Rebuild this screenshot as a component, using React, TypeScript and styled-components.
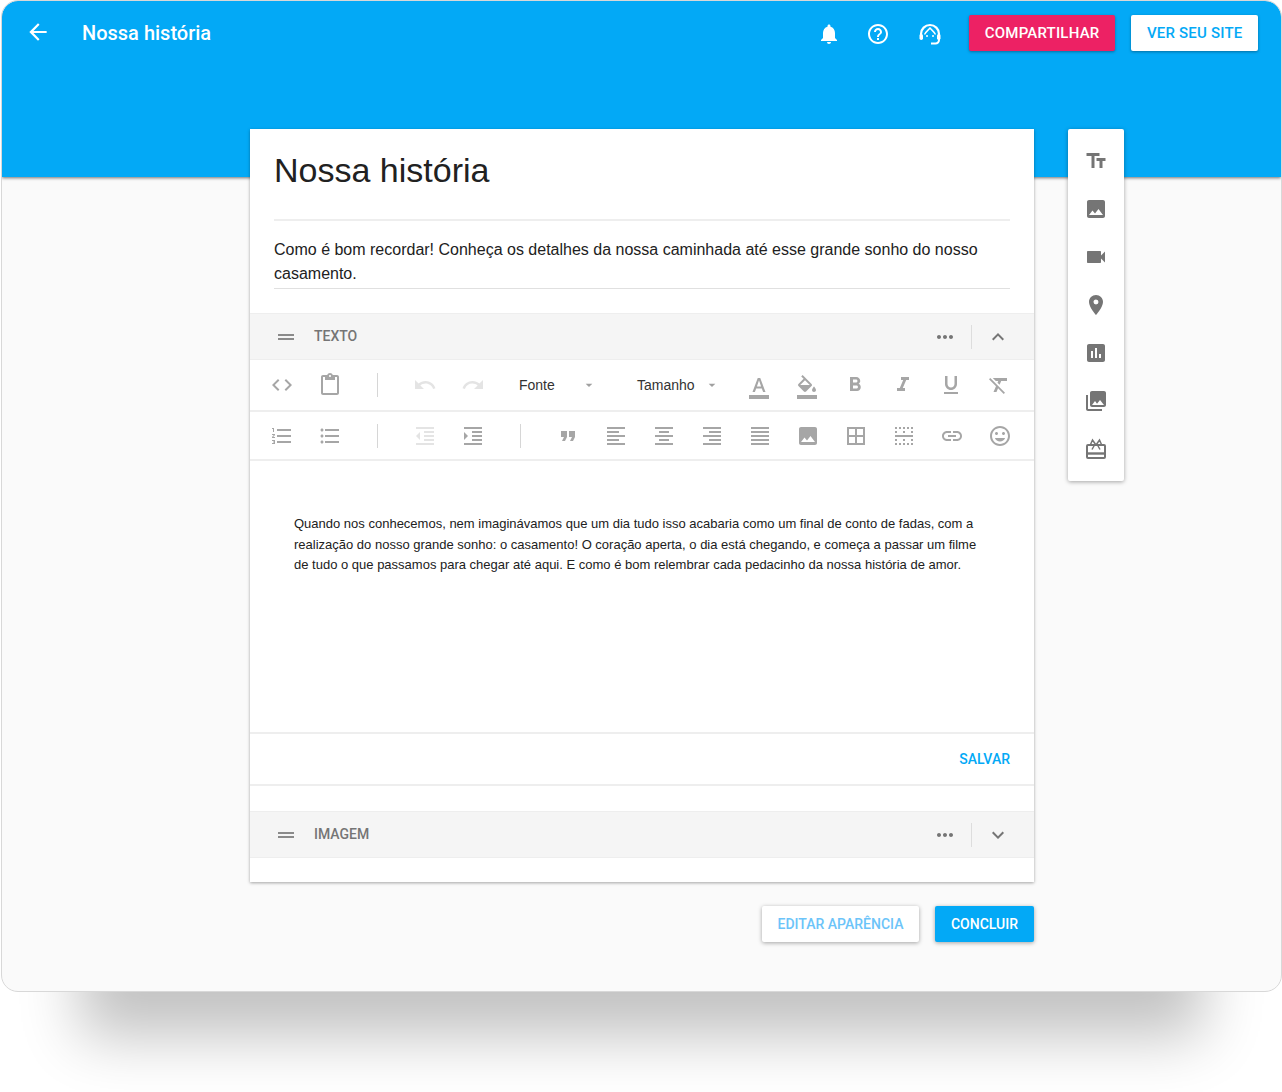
import React from "react";
import styled, { createGlobalStyle } from "styled-components";
import {
  MdArrowBack,
  MdNotifications,
  MdHelpOutline,
  MdTextFields,
  MdImage,
  MdVideocam,
  MdPlace,
  MdAssessment,
  MdPhotoLibrary,
  MdDragHandle,
  MdMoreHoriz,
  MdExpandLess,
  MdExpandMore,
  MdCode,
  MdContentPaste,
  MdUndo,
  MdRedo,
  MdArrowDropDown,
  MdFormatColorText,
  MdFormatColorFill,
  MdFormatBold,
  MdFormatItalic,
  MdFormatUnderlined,
  MdFormatClear,
  MdFormatListNumbered,
  MdFormatListBulleted,
  MdFormatIndentDecrease,
  MdFormatIndentIncrease,
  MdFormatQuote,
  MdFormatAlignLeft,
  MdFormatAlignCenter,
  MdFormatAlignRight,
  MdFormatAlignJustify,
  MdBorderAll,
  MdBorderHorizontal,
  MdLink,
  MdTagFaces,
} from "react-icons/md";

const GlobalStyle = createGlobalStyle`
  html, body {
    margin: 0;
    background: #fff;
  }
  body {
    height: 1092px;
    overflow: hidden;
    font-family: Roboto, "Liberation Sans", sans-serif;
  }
  * {
    box-sizing: border-box;
  }
`;

const Stage = styled.div`
  padding: 1px 1px 1px 2px;
`;

const WindowShadow = styled.div`
  border-radius: 16px;
  box-shadow: 0 124px 56px -78px rgba(0, 0, 0, 0.24);
`;

const Frame = styled.div`
  width: 1279px;
  height: 990px;
  border-radius: 16px;
  background: #fafafa;
  overflow: hidden;
  outline: 1px solid #d8d8d8;
`;

const TopBar = styled.header`
  height: 176px;
  background: #03a9f6;
  box-shadow: 0 1px 3px rgba(0, 0, 0, 0.55);
  display: flex;
  align-items: flex-start;
  padding: 14px 23px 0 23px;
  color: #fff;
`;

const BackButton = styled.div`
  width: 26px;
  height: 34px;
  display: flex;
  align-items: center;
  font-size: 26px;
  margin-right: 31px;
`;

const PageName = styled.h1`
  flex: 1;
  margin: 0;
  font-size: 20px;
  font-weight: 500;
  line-height: 36px;
`;

const TopIcon = styled.div<{ $width: number }>`
  width: ${(p) => p.$width}px;
  height: 37px;
  display: flex;
  align-items: center;
  justify-content: center;
  font-size: 24px;
`;

const TopButton = styled.button<{ $primary?: boolean }>`
  height: 36px;
  border: 0;
  border-radius: 2px;
  padding: 0 ${(p) => (p.$primary ? "16px" : "15.5px")};
  margin-left: 16px;
  font-family: Roboto, sans-serif;
  font-size: 15px;
  font-weight: 500;
  letter-spacing: 0.2px;
  background: ${(p) => (p.$primary ? "#ed2164" : "#fff")};
  color: ${(p) => (p.$primary ? "#fff" : "#03a9f6")};
  box-shadow: 0 1px 3px rgba(0, 0, 0, 0.35);
`;

const Content = styled.main`
  display: flex;
  align-items: flex-start;
  gap: 34px;
  margin: -48px 0 0 248px;
  position: relative;
`;

const Column = styled.div`
  width: 784px;
`;

const Card = styled.section`
  background: #fff;
  height: 753px;
  box-shadow: 0 1px 3px rgba(0, 0, 0, 0.35);
`;

const TitleWrap = styled.div`
  height: 92px;
  margin: 0 24px;
  border-bottom: 2px solid #eee;
`;

const Title = styled.h2`
  margin: 0;
  padding-top: 21px;
  font-family: "Liberation Sans", Arial, sans-serif;
  font-size: 34px;
  font-weight: 400;
  line-height: 40px;
  color: #212121;
`;

const Lead = styled.p`
  margin: 0 24px 24px;
  padding: 17px 0 2px;
  border-bottom: 1px solid #e0e0e0;
  font-family: "Liberation Sans", Arial, sans-serif;
  font-size: 16px;
  line-height: 24px;
  color: #212121;
`;

const BlockHead = styled.div`
  height: 47px;
  display: flex;
  align-items: center;
  background: #f5f5f5;
  border-top: 1px solid #eee;
  border-bottom: 1px solid #eee;
  color: #757575;
`;

const Handle = styled.div`
  width: 24px;
  margin-left: 24px;
  display: flex;
  font-size: 24px;
  color: #8a8a8a;
`;

const BlockName = styled.span`
  flex: 1;
  margin-left: 16px;
  padding-bottom: 2px;
  font-size: 14px;
  font-weight: 500;
  color: #757575;
`;

const HeadAction = styled.div`
  width: 24px;
  display: flex;
  font-size: 24px;
  color: #757575;
`;

const HeadDivider = styled.div`
  width: 1px;
  height: 24px;
  margin: 0 14px;
  background: #ddd;
`;

const HeadEnd = styled.div`
  width: 24px;
`;

const Toolbar = styled.div<{ $height: number }>`
  height: ${(p) => p.$height}px;
  display: flex;
  align-items: center;
  padding-left: 8px;
  border-bottom: 2px solid #eee;
`;

const Tool = styled.div<{ $off?: boolean; $low?: boolean }>`
  width: 48px;
  height: 32px;
  flex: none;
  display: flex;
  align-items: center;
  justify-content: center;
  padding-top: ${(p) => (p.$low ? "4px" : "0")};
  font-size: 24px;
  color: ${(p) => (p.$off ? "#e4e4e4" : "#a6a6a6")};
`;

const ToolDivider = styled.div<{ $width: number }>`
  width: ${(p) => p.$width}px;
  height: 24px;
  flex: none;
  display: flex;
  justify-content: center;

  &::before {
    content: "";
    width: 1px;
    background: #d6d6d6;
  }
`;

const Select = styled.div<{ $width: number }>`
  width: ${(p) => p.$width}px;
  flex: none;
  display: flex;
  align-items: center;
  padding-left: 22px;
  font-family: "Liberation Sans", Arial, sans-serif;
  font-size: 14px;
  color: #333;
`;

const Caret = styled.span<{ $gap: number }>`
  display: flex;
  margin-left: ${(p) => p.$gap}px;
  font-size: 16px;
  color: #a0a0a0;
`;

const Editor = styled.div`
  height: 273px;
  padding: 53px 44px 0;
  border-bottom: 2px solid #eee;
  font-family: "Liberation Sans", Arial, sans-serif;
  font-size: 13px;
  line-height: 20.5px;
  color: #212121;
`;

const SaveRow = styled.div`
  height: 52px;
  margin-bottom: 25px;
  display: flex;
  align-items: center;
  justify-content: flex-end;
  padding-right: 24px;
  border-bottom: 2px solid #eee;
  font-size: 14px;
  font-weight: 500;
  color: #03a9f6;
`;

const Actions = styled.div`
  display: flex;
  justify-content: flex-end;
  gap: 16px;
  margin-top: 24px;
`;

const ActionButton = styled.button<{ $primary?: boolean }>`
  height: 36px;
  border: 0;
  border-radius: 2px;
  padding: 0 ${(p) => (p.$primary ? "16px" : "15.5px")};
  font-family: Roboto, sans-serif;
  font-size: 14px;
  font-weight: 500;
  background: ${(p) => (p.$primary ? "#03a9f6" : "#fff")};
  color: ${(p) => (p.$primary ? "#fff" : "#6cc4f9")};
  box-shadow: 0 1px 4px rgba(0, 0, 0, 0.35);
`;

const Palette = styled.aside`
  width: 56px;
  height: 352px;
  padding-top: 8px;
  border-radius: 2px;
  background: #fff;
  box-shadow: 0 1px 4px rgba(0, 0, 0, 0.35);
`;

const PaletteItem = styled.div`
  height: 48px;
  display: flex;
  align-items: center;
  justify-content: center;
  font-size: 24px;
  color: #757575;
`;

const AgentIcon = () => (
  <svg width="24" height="24" viewBox="0 0 24 24" fill="none" stroke="currentColor">
    <path d="M3 14v-2a9 9 0 0 1 18 0v2" strokeWidth="2.2" />
    <path d="M6.5 12.5C8 9.5 10 8.5 12 6c2 2.500 4 3.500 5.500 6.500" strokeWidth="1.4" />
    <rect x="1.500" y="12" width="3.500" height="6" rx="1.700" fill="currentColor" stroke="none" />
    <rect x="19" y="12" width="3.500" height="6" rx="1.700" fill="currentColor" stroke="none" />
    <circle cx="9" cy="14" r="1" fill="currentColor" stroke="none" />
    <circle cx="15" cy="14" r="1" fill="currentColor" stroke="none" />
    <path d="M21 17v1a3.500 3.500 0 0 1-3.500 3.500H13" strokeWidth="2" />
  </svg>
);

const GiftIcon = () => (
  <svg width="24" height="24" viewBox="0 0 24 24" fill="none" stroke="currentColor">
    <rect x="3" y="8" width="18" height="13" rx="1" strokeWidth="2" />
    <path d="M3 16.500h18" strokeWidth="2.400" />
    <path d="M12 8 8.500 3 6.500 7.500zM12 8l3.500-5 2 4.500z" strokeWidth="1.500" />
    <path d="M10.500 8 8 12.500M13.500 8l2.500 4.500" strokeWidth="1.500" />
  </svg>
);

const App: React.FC = () => {
  return (
    <>
      <GlobalStyle />
      <Stage>
        <WindowShadow>
          <Frame>
            <TopBar>
              <BackButton>
                <MdArrowBack />
              </BackButton>
              <PageName>Nossa história</PageName>
              <TopIcon $width={38}>
                <MdNotifications />
              </TopIcon>
              <TopIcon $width={60}>
                <MdHelpOutline />
              </TopIcon>
              <TopIcon $width={45}>
                <AgentIcon />
              </TopIcon>
              <TopButton $primary>COMPARTILHAR</TopButton>
              <TopButton>VER SEU SITE</TopButton>
            </TopBar>
            <Content>
              <Column>
                <Card>
                  <TitleWrap>
                    <Title>Nossa história</Title>
                  </TitleWrap>
                  <Lead>
                    Como é bom recordar! Conheça os detalhes da nossa caminhada até esse grande sonho do nosso
                    casamento.
                  </Lead>
                  <BlockHead>
                    <Handle>
                      <MdDragHandle />
                    </Handle>
                    <BlockName>TEXTO</BlockName>
                    <HeadAction>
                      <MdMoreHoriz />
                    </HeadAction>
                    <HeadDivider />
                    <HeadAction>
                      <MdExpandLess />
                    </HeadAction>
                    <HeadEnd />
                  </BlockHead>
                  <Toolbar $height={52}>
                    <Tool><MdCode /></Tool>
                    <Tool><MdContentPaste /></Tool>
                    <ToolDivider $width={47} />
                    <Tool $off><MdUndo /></Tool>
                    <Tool $off><MdRedo /></Tool>
                    <Select $width={118}>
                      Fonte
                      <Caret $gap={26}><MdArrowDropDown /></Caret>
                    </Select>
                    <Select $width={120}>
                      Tamanho
                      <Caret $gap={9}><MdArrowDropDown /></Caret>
                    </Select>
                    <Tool $low><MdFormatColorText /></Tool>
                    <Tool $low><MdFormatColorFill /></Tool>
                    <Tool><MdFormatBold /></Tool>
                    <Tool><MdFormatItalic /></Tool>
                    <Tool><MdFormatUnderlined /></Tool>
                    <Tool><MdFormatClear /></Tool>
                  </Toolbar>
                  <Toolbar $height={49}>
                    <Tool><MdFormatListNumbered /></Tool>
                    <Tool><MdFormatListBulleted /></Tool>
                    <ToolDivider $width={47} />
                    <Tool $off><MdFormatIndentDecrease /></Tool>
                    <Tool><MdFormatIndentIncrease /></Tool>
                    <ToolDivider $width={46.5} />
                    <Tool><MdFormatQuote /></Tool>
                    <Tool><MdFormatAlignLeft /></Tool>
                    <Tool><MdFormatAlignCenter /></Tool>
                    <Tool><MdFormatAlignRight /></Tool>
                    <Tool><MdFormatAlignJustify /></Tool>
                    <Tool><MdImage /></Tool>
                    <Tool><MdBorderAll /></Tool>
                    <Tool><MdBorderHorizontal /></Tool>
                    <Tool><MdLink /></Tool>
                    <Tool><MdTagFaces /></Tool>
                  </Toolbar>
                  <Editor>
                    Quando nos conhecemos, nem imaginávamos que um dia tudo isso acabaria como um final de conto de
                    fadas, com a realização do nosso grande sonho: o casamento! O coração aperta, o dia está chegando, e
                    começa a passar um filme de tudo o que passamos para chegar até aqui. E como é bom relembrar cada
                    pedacinho da nossa história de amor.
                  </Editor>
                  <SaveRow>SALVAR</SaveRow>
                  <BlockHead>
                    <Handle>
                      <MdDragHandle />
                    </Handle>
                    <BlockName>IMAGEM</BlockName>
                    <HeadAction>
                      <MdMoreHoriz />
                    </HeadAction>
                    <HeadDivider />
                    <HeadAction>
                      <MdExpandMore />
                    </HeadAction>
                    <HeadEnd />
                  </BlockHead>
                </Card>
                <Actions>
                  <ActionButton>EDITAR APARÊNCIA</ActionButton>
                  <ActionButton $primary>CONCLUIR</ActionButton>
                </Actions>
              </Column>
              <Palette>
                <PaletteItem><MdTextFields /></PaletteItem>
                <PaletteItem><MdImage /></PaletteItem>
                <PaletteItem><MdVideocam /></PaletteItem>
                <PaletteItem><MdPlace /></PaletteItem>
                <PaletteItem><MdAssessment /></PaletteItem>
                <PaletteItem><MdPhotoLibrary /></PaletteItem>
                <PaletteItem><GiftIcon /></PaletteItem>
              </Palette>
            </Content>
          </Frame>
        </WindowShadow>
      </Stage>
    </>
  );
};

export default App;
